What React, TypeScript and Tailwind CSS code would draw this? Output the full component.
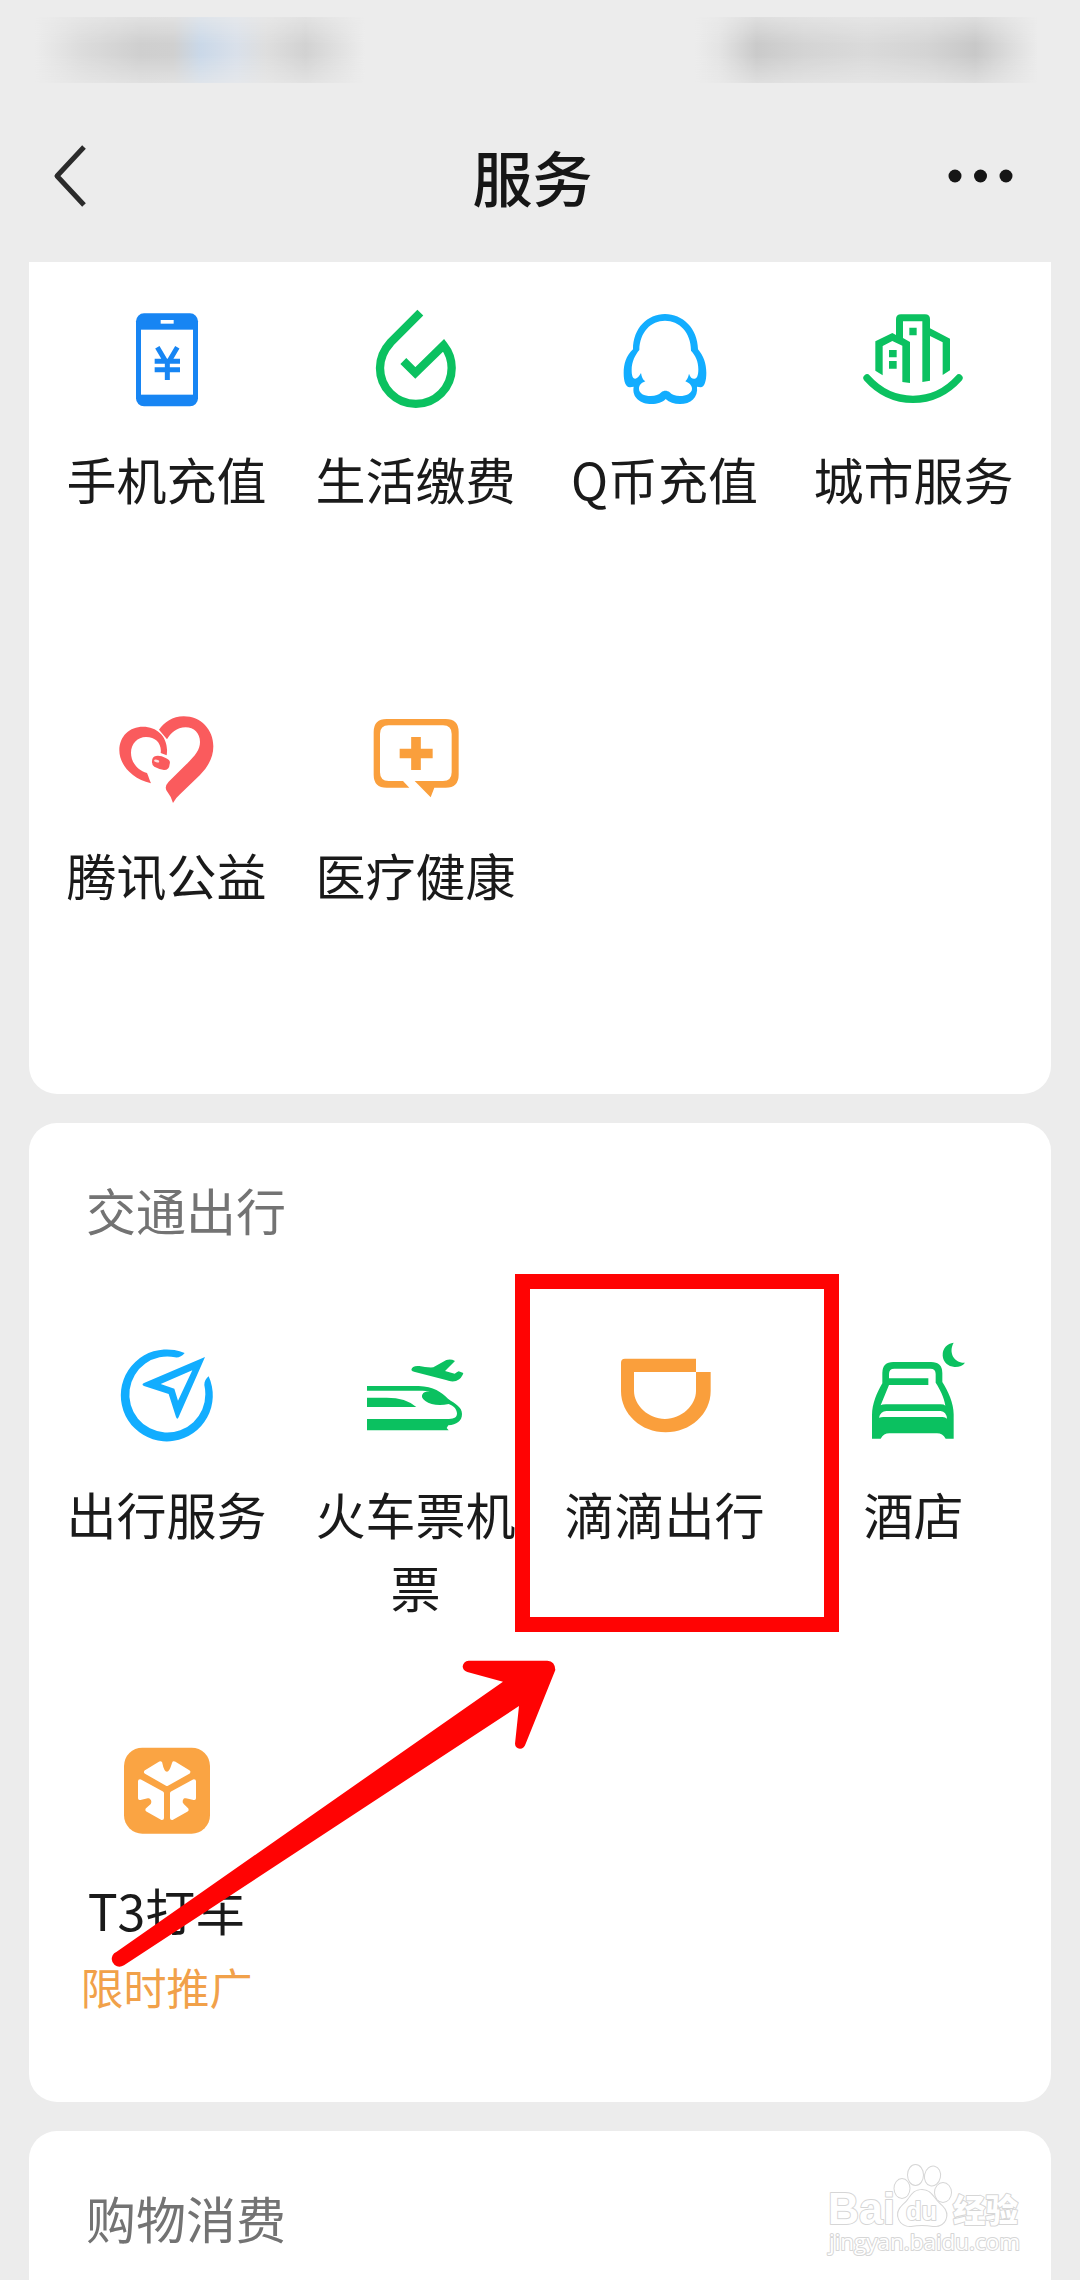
import type { ReactNode } from 'react';

interface Service { name: string; icon: ReactNode; promo?: string; }

const BLUE = '#12adff';
const GREEN = '#0bc160';
const ORANGE = '#fa9f3c';
const RED = '#fa5b5d';

function Icon({ viewBox, children }: { viewBox: string; children: ReactNode }) {
  return <svg viewBox={viewBox} className="size-[100px] shrink-0 overflow-visible" fill="none">{children}</svg>;
}

const PhoneIcon = () => (
  <Icon viewBox="171 60 300 300">
    <rect x="228" y="70" width="186" height="279" rx="24" fill="#1785f3" />
    <rect x="243" y="119" width="156" height="195" fill="#fff" />
    <rect x="302" y="90" width="39" height="11" fill="#fff" />
    <path d="M292 172L316 212M352 172L328 212M284 214H360M284 239H360M322 206V270" stroke="#1785f3" strokeWidth="15" />
  </Icon>
);

const BillIcon = () => (
  <Icon viewBox="918 60 300 300">
    <path d="M1081 68L992 157C972 179 960 206 960 234A107.500 107.500 0 0 0 1067.500 341.500A107.500 107.500 0 0 0 1175 234C1175 209 1166 185 1151 166L1066 249L1030 213" stroke={GREEN} strokeWidth="25" />
  </Icon>
);

const QCoinIcon = () => (
  <Icon viewBox="225 60 300 300">
    <path fillRule="evenodd" fill={BLUE} d="M375 72C323 72 279 114 279 178C258 198 251 222 251 250C251 276 258 293 270 292L281 290C275 323 302 342 335 342C352 342 368 337 377 327C388 337 402 342 420 342C452 342 475 322 471 290L482 292C493 291 499 274 499 248C499 220 490 197 474 178C473 114 427 72 375 72ZM375 92C417 92 453 126 453 182C466 196 475 213 475 238C475 256 471 266 464 266C457 267 451 263 447 251C445 261 442 268 436 274C449 279 456 288 456 296C456 310 438 318 420 318C406 318 396 315 389 307C381 301 371 301 364 307C356 315 347 318 332 318C312 318 297 310 297 296C297 285 304 279 316 274C308 269 305 261 303 249C298 258 293 265 286 266C278 267 275 255 275 240C275 215 286 194 298 180C299 126 333 92 375 92Z" />
  </Icon>
);

const CityIcon = () => (
  <Icon viewBox="972 60 300 300">
    <path d="M981 264Q1038 328 1119 328Q1200 328 1257 264" stroke={GREEN} strokeWidth="22" strokeLinecap="round" />
    <path fill={GREEN} d="M1006 242V154L1057 129L1068 135V87Q1068 73 1083 73H1155Q1170 73 1170 87V115L1230 146V241L1208 255V157L1170 138V272L1147 276V94H1089V144L1110 156V279L1087 276V167L1057 153L1028 168V256Z" />
    <path fill={GREEN} d="M1108 113H1130V136H1108ZM1047 180H1070V202H1047ZM1047 213H1070V236H1047Z" />
  </Icon>
);

const HeartIcon = () => (
  <Icon viewBox="171 48 300 300">
    <path fill={RED} d="M297 119C312 97 338 79 371 79C423 79 460 119 460 169C460 202 445 229 420 255L360 313Q348 323 339 339Q333 319 323 307Q310 292 326 275L379 223C405 197 420 180 420 156C420 130 402 112 377 112C350 112 332 129 321 148Z" />
    <path fill={RED} d="M273 280C214 266 178 223 178 181C178 138 209 110 249 110C294 110 328 144 320 196L302 189C306 162 288 141 258 141C233 141 213 161 213 188C213 216 231 240 261 249C266 260 269 271 273 280Z" />
    <path fill={RED} d="M288 198Q302 196 317 204Q333 210 329 222Q328 240 312 240Q296 237 283 230Q275 225 276 213Q277 199 288 198Z" />
    <ellipse cx="290" cy="213" rx="8" ry="4" transform="rotate(15 290 213)" fill="#fff" opacity=".8" />
  </Icon>
);

const MedicalIcon = () => (
  <Icon viewBox="918 48 300 300">
    <path fill={ORANGE} d="M1048 293H980Q941 293 941 254V126Q941 87 980 87H1157Q1196 87 1196 126V254Q1196 293 1157 293H1123L1112 322L1064 273H1149Q1175 273 1175 247V132Q1175 106 1149 106H986Q960 106 960 132V247Q960 273 986 273H1029Z" />
    <path d="M1068 141V240M1019 190.500H1118" stroke={ORANGE} strokeWidth="29" />
  </Icon>
);

const TravelIcon = () => (
  <Icon viewBox="171 76 300 300">
    <path fill={BLUE} d="M374 100A138 138 0 1 0 446 170C438 177 433 184 433 196C435 205 436 214 436 224A114 114 0 1 1 345 113Q362 115 374 100Z" />
    <path fillRule="evenodd" fill={BLUE} d="M435 112L356 292Q352 302 348 292L326 223L252 199Q243 195 252 190ZM397 152L302 193L343 207L354 243Z" />
  </Icon>
);

const TrainIcon = () => (
  <Icon viewBox="918 76 300 300">
    <path fill={GREEN} d="M1054 151Q1056 137 1078 139Q1098 144 1120 143L1159 121Q1173 117 1185 124L1155 154L1184 162Q1191 157 1196 155L1210 160Q1207 175 1188 184Q1174 188 1158 181L1065 157Q1056 155 1054 151Z" />
    <path fill={GREEN} d="M921 199H1076C1121 200 1144 218 1164 237C1186 253 1206 261 1206 283C1206 304 1190 315 1165 317L1160 325L1166 332H921V298H1167C1184 298 1191 292 1191 281C1190 267 1180 258 1166 253C1137 259 1111 255 1096 244Q1079 232 1090 220C1096 215 1107 216 1115 219C1105 214 1091 213 1076 213H921Z" />
    <path fill={GREEN} d="M921 234H980Q1038 234 1069 262H921Z" />
  </Icon>
);

const DidiIcon = () => (
  <Icon viewBox="345 256 300 300">
    <path fill={ORANGE} d="M363 309Q363 297 375 297H588V337H402V394C402 436 445 478 495 478C545 478 588 436 588 394V337H632V394C632 463 571 518 497 518C423 518 363 463 363 394Z" />
  </Icon>
);

const HotelIcon = () => (
  <Icon viewBox="1092 256 300 300">
    <path fill={GREEN} d="M1361 249C1344 279 1363 311 1395 309Q1385 322 1366 322A34 35 0 0 1 1361 249Z" />
    <path fill={GREEN} fillRule="evenodd" d="M1116 537V466C1116 433 1131 398 1147 371V340Q1147 307 1180 307H1293Q1327 307 1327 340V367C1344 394 1361 430 1361 464V537H1337Q1328 521 1311 521H1168Q1151 521 1142 537ZM1183 327Q1167 327 1167 343V356H1285V376H1167L1142 437Q1146 434 1158 434H1321Q1333 434 1336 438C1332 412 1319 387 1307 369V343Q1307 327 1291 327ZM1159 454Q1142 454 1137 474Q1143 472 1150 472H1328Q1336 472 1341 477Q1339 456 1322 454Z" />
  </Icon>
);

const T3Icon = () => (
  <Icon viewBox="171 304 300 300">
    <rect x="192" y="324" width="258" height="258" rx="55" fill="#faa443" />
    <g fill="#fff" stroke="#fff" strokeWidth="12" strokeLinejoin="round">
      <path d="M321 433L258 397L301 371C304 386 308 402 321 402C334 402 337 386 342 371L385 397Z" />
      <path d="M240 425L306 461V535L262 510L277 497C285 486 277 470 265 469L240 475Z" />
      <path d="M402 425L336 461V535L380 510L367 497C356 486 364 470 376 469L402 475Z" />
    </g>
  </Icon>
);

const lifeServices: Service[] = [
  { name: '手机充值', icon: <PhoneIcon /> },
  { name: '生活缴费', icon: <BillIcon /> },
  { name: 'Q币充值', icon: <QCoinIcon /> },
  { name: '城市服务', icon: <CityIcon /> },
  { name: '腾讯公益', icon: <HeartIcon /> },
  { name: '医疗健康', icon: <MedicalIcon /> },
];

const travelServices: Service[] = [
  { name: '出行服务', icon: <TravelIcon /> },
  { name: '火车票机票', icon: <TrainIcon /> },
  { name: '滴滴出行', icon: <DidiIcon /> },
  { name: '酒店', icon: <HotelIcon /> },
  { name: 'T3打车', icon: <T3Icon />, promo: '限时推广' },
];

function ServiceGrid({ services }: { services: Service[] }) {
  return (
    <div className="grid grid-cols-4 auto-rows-[396px] px-[13px]">
      {services.map(s => (
        <div key={s.name} className="flex flex-col items-center pt-2">
          {s.icon}
          <p className="mt-8 w-[210px] text-center text-[50px] leading-[73px] text-[#1a1a1a] break-all">{s.name}</p>
          {s.promo && <p className="mt-[10px] text-[43px] leading-[60px] text-[#f1a14a]">{s.promo}</p>}
        </div>
      ))}
    </div>
  );
}

function SectionTitle({ children }: { children: ReactNode }) {
  return <h2 className="pl-[57px] text-[50px] leading-[72px] text-[#737373]">{children}</h2>;
}

function Header() {
  return (
    <header className="h-[262px] shrink-0">
      <div className="flex h-[83px] justify-between pt-[17px] pl-[35px] pr-[43px]">
        <div className="h-[66px] w-[330px] bg-[linear-gradient(90deg,#ececec_0%,#dcdcdc_14%,#cfcfcf_32%,#d0d0d0_42%,#cad8e8_50%,#d9e0ea_61%,#dedede_70%,#d2d2d2_82%,#ececec_100%)] [mask-image:linear-gradient(180deg,rgba(0,0,0,.4),#000_40%,#000_58%,rgba(0,0,0,.4))]" />
        <div className="h-[66px] w-[342px] bg-[linear-gradient(90deg,#ececec_0%,#e4e4e4_7%,#cacaca_18%,#d4d4d4_32%,#dadada_50%,#d4d4d4_68%,#c8c8c8_82%,#dedede_93%,#ebebeb_100%)] [mask-image:linear-gradient(180deg,rgba(0,0,0,.4),#000_40%,#000_58%,rgba(0,0,0,.4))]" />
      </div>
      <div className="grid h-[186px] grid-cols-[1fr_auto_1fr] items-center pl-[52px] pr-[66px]">
        <svg viewBox="0 0 36 64" className="h-16 w-9" fill="none">
          <path d="M32 3L5 32L32 61" stroke="#2b2b2b" strokeWidth="5" strokeLinejoin="round" />
        </svg>
        <h1 className="-mt-[1px] pr-[1px] text-[60px] leading-[80px] font-medium text-[#161616]">服务</h1>
        <svg viewBox="0 0 68 16" className="h-4 w-[68px] justify-self-end" fill="#161616">
          <circle cx="9" cy="8" r="6.500" />
          <circle cx="34.500" cy="8" r="6.500" />
          <circle cx="60" cy="8" r="6.500" />
        </svg>
      </div>
    </header>
  );
}

function Watermark() {
  return (
    <svg viewBox="0 0 300 150" className="absolute left-[780px] top-[2130px] h-[150px] w-[300px]" fill="#fff" stroke="#d6d6d6" strokeWidth="2" strokeLinejoin="round" paintOrder="stroke">
      <text x="48" y="94" fontSize="44" fontWeight="bold" textLength="67" lengthAdjust="spacingAndGlyphs" fontFamily="Liberation Sans, sans-serif">Bai</text>
      <ellipse cx="122" cy="58.500" rx="7.500" ry="9.500" />
      <ellipse cx="135.500" cy="45" rx="7.500" ry="10" />
      <ellipse cx="152.500" cy="46" rx="7.500" ry="9.500" transform="rotate(12 152.500 46)" />
      <ellipse cx="163" cy="62.500" rx="8" ry="9.500" />
      <path d="M142 60C131 60 131 69 123 75C113 84 120 97 131 96Q142 94 153 96C165 97 171 85 162 76C153 69 152 60 142 60Z" />
      <text x="126" y="90" fontSize="26" textLength="31" lengthAdjust="spacingAndGlyphs" fontWeight="bold" fontFamily="Liberation Sans, sans-serif">du</text>
      <text x="173" y="92" fontSize="32" fontWeight="900" textLength="65" lengthAdjust="spacingAndGlyphs" fontFamily="Noto Sans CJK SC, sans-serif">经验</text>
      <text x="49" y="120" fontSize="22" textLength="191" lengthAdjust="spacingAndGlyphs" fontFamily="Open Sans, sans-serif">jingyan.baidu.com</text>
    </svg>
  );
}

export default function App() {
  return (
    <div className="relative flex h-[2280px] w-[1080px] flex-col overflow-hidden bg-[#ececec] font-['Noto_Sans_CJK_SC',sans-serif]">
      <Header />
      <main className="flex flex-col gap-[29px] px-[29px]">
        <section className="h-[832px] rounded-b-[28px] bg-white pt-10">
          <ServiceGrid services={lifeServices} />
        </section>
        <section className="h-[979px] rounded-[28px] bg-white pt-[50px]">
          <SectionTitle>交通出行</SectionTitle>
          <div className="mt-[92px]"><ServiceGrid services={travelServices} /></div>
        </section>
        <section className="h-[400px] rounded-t-[28px] bg-white pt-[50px]">
          <SectionTitle>购物消费</SectionTitle>
        </section>
      </main>

      {/* highlight box and arrow */}
      <div className="absolute left-[515px] top-[1274px] h-[358px] w-[324px] border-[15px] border-[#ff0303]" />
      <svg viewBox="0 0 1560 1200" className="absolute left-[60px] top-[1640px] h-[400px] w-[520px]">
        <path fill="#ff0303" d="M1226 62H1462Q1485 63 1486 90L1397 311Q1392 326 1380 326Q1366 325 1365 311L1377 198L192 976Q177 985 164 975Q150 962 158 946Q161 938 170 935L1329 125L1222 96Q1208 91 1208 79Q1210 64 1226 62Z" />
      </svg>
      <Watermark />
    </div>
  );
}
